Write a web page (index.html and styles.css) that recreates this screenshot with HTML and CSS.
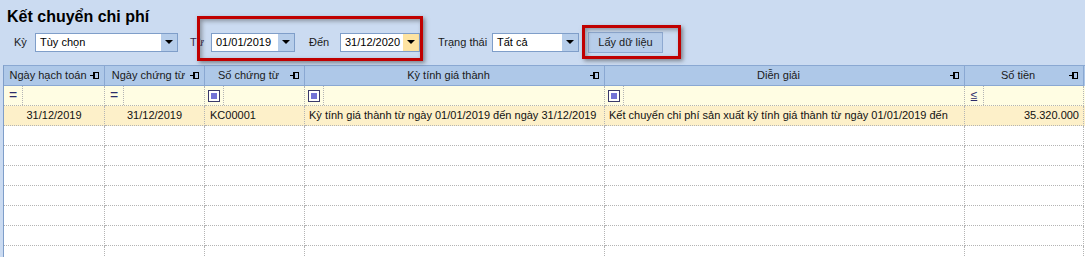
FILE: index.html
```html
<!DOCTYPE html>
<html lang="vi">
<head>
<meta charset="utf-8">
<title>Kết chuyển chi phí</title>
<link rel="stylesheet" href="styles.css">
</head>
<body>
<div class="page">
  <h1 class="title">Kết chuyển chi phí</h1>
  <div class="toolbar">
    <span class="lbl lbl-ky">Kỳ</span>
    <div class="combo combo-ky"><span class="val">Tùy chọn</span><span class="btn"><i class="tri"></i></span></div>
    <span class="lbl lbl-tu">Từ</span>
    <div class="combo combo-d1"><span class="val">01/01/2019</span><span class="btn"><i class="tri"></i></span></div>
    <span class="lbl lbl-den">Đến</span>
    <div class="combo combo-d2"><span class="val">31/12/2020</span><span class="btn hot"><i class="tri"></i></span></div>
    <span class="lbl lbl-tt">Trạng thái</span>
    <div class="combo combo-tt"><span class="val">Tất cả</span><span class="btn"><i class="tri"></i></span></div>
    <button class="fetch">Lấy dữ liệu</button>
    <div class="mark mark-1"></div>
    <div class="mark mark-2"></div>
  </div>
  <div class="grid">
    <div class="row head">
      <div class="c c1"><span class="ht">Ngày hạch toán</span><i class="pin"></i></div>
      <div class="c c2"><span class="ht">Ngày chứng từ</span><i class="pin"></i></div>
      <div class="c c3"><span class="ht">Số chứng từ</span><i class="pin"></i></div>
      <div class="c c4"><span class="ht">Kỳ tính giá thành</span><i class="pin"></i></div>
      <div class="c c5"><span class="ht">Diễn giải</span><i class="pin"></i></div>
      <div class="c c6"><span class="ht">Số tiền</span><i class="pin"></i></div>
    </div>
    <div class="row filter">
      <div class="c c1"><span class="op">=</span></div>
      <div class="c c2"><span class="op">=</span></div>
      <div class="c c3"><span class="op"><i class="sq"></i></span></div>
      <div class="c c4"><span class="op"><i class="sq"></i></span></div>
      <div class="c c5"><span class="op"><i class="sq"></i></span></div>
      <div class="c c6"><span class="op le">≤</span></div>
    </div>
    <div class="row data">
      <div class="c c1 center">31/12/2019</div>
      <div class="c c2 center">31/12/2019</div>
      <div class="c c3">KC00001</div>
      <div class="c c4">Kỳ tính giá thành từ ngày 01/01/2019 đến ngày 31/12/2019</div>
      <div class="c c5 wrap">Kết chuyển chi phí sản xuất kỳ tính giá thành từ ngày 01/01/2019 đến ngày 31/12/2019</div>
      <div class="c c6 right">35.320.000</div>
    </div>
    <div class="row empty"><div class="c c1"></div><div class="c c2"></div><div class="c c3"></div><div class="c c4"></div><div class="c c5"></div><div class="c c6"></div></div>
    <div class="row empty"><div class="c c1"></div><div class="c c2"></div><div class="c c3"></div><div class="c c4"></div><div class="c c5"></div><div class="c c6"></div></div>
    <div class="row empty"><div class="c c1"></div><div class="c c2"></div><div class="c c3"></div><div class="c c4"></div><div class="c c5"></div><div class="c c6"></div></div>
    <div class="row empty"><div class="c c1"></div><div class="c c2"></div><div class="c c3"></div><div class="c c4"></div><div class="c c5"></div><div class="c c6"></div></div>
    <div class="row empty"><div class="c c1"></div><div class="c c2"></div><div class="c c3"></div><div class="c c4"></div><div class="c c5"></div><div class="c c6"></div></div>
    <div class="row empty"><div class="c c1"></div><div class="c c2"></div><div class="c c3"></div><div class="c c4"></div><div class="c c5"></div><div class="c c6"></div></div>
    <div class="row empty"><div class="c c1"></div><div class="c c2"></div><div class="c c3"></div><div class="c c4"></div><div class="c c5"></div><div class="c c6"></div></div>
  </div>
</div>
</body>
</html>
```
FILE: styles.css
```css
html, body {
  margin: 0;
  padding: 0;
  height: 100%;
  overflow: hidden;
}
body {
  background: #cbdbf1;
  font-family: "Liberation Sans", Arial, sans-serif;
  font-size: 11px;
  color: #000;
}
.title {
  margin: 0;
  padding: 6px 0 0 7px;
  height: 22px;
  font-size: 16px;
  font-weight: bold;
  line-height: 22px;
  color: #000;
}
.toolbar {
  position: relative;
  display: flex;
  align-items: center;
  height: 20px;
  margin-top: 4px;
}
.lbl {
  white-space: nowrap;
  line-height: 20px;
  color: #1a1a1a;
}
.lbl-ky { margin-left: 14px; width: 21px; }
.lbl-tu { margin-left: 12px; width: 21px; color: #3a2a4a; }
.lbl-den { margin-left: 14px; width: 31px; }
.lbl-tt { margin-left: 18px; width: 54px; }
.combo {
  display: flex;
  height: 17px;
  border: 1px solid #7f9ec9;
  background: #fff;
}
.combo .val {
  flex: 1;
  padding-left: 4px;
  line-height: 17px;
  white-space: nowrap;
  overflow: hidden;
}
.combo .btn {
  width: 16px;
  background: #b6cdea;
  display: flex;
  align-items: center;
  justify-content: center;
}
.combo .btn.hot {
  background: #fde3a1;
}
.tri {
  display: block;
  width: 0;
  height: 0;
  border-left: 4px solid transparent;
  border-right: 4px solid transparent;
  border-top: 4px solid #000;
}
.combo-ky { width: 141px; }
.combo-d1 { width: 82px; }
.combo-d2 { width: 78px; }
.combo-tt { width: 85px; }
.fetch {
  margin-left: 9px;
  width: 75px;
  height: 21px;
  padding: 0;
  border: 1px solid #8ea9d1;
  background: #b7cdea;
  font-family: "Liberation Sans", Arial, sans-serif;
  font-size: 11px;
  color: #1a1a1a;
}
.mark {
  position: absolute;
  border: 3px solid #c00000;
  box-shadow: 2px 2px 4px rgba(60, 60, 60, 0.55), inset 2px 2px 4px rgba(60, 60, 60, 0.45);
}
.mark-1 { left: 197px; top: -16px; width: 220px; height: 39px; }
.mark-2 { left: 582px; top: -7px; width: 93px; height: 28px; }

.grid {
  margin: 13px 0 0 3px;
  width: 1081px;
  border-left: 1px solid #7f9ec9;
  border-top: 1px solid #8aa8d2;
  background: #fff;
}
.row {
  display: flex;
  height: 20px;
}
.c {
  box-sizing: border-box;
  height: 20px;
  line-height: 19px;
  white-space: nowrap;
  overflow: hidden;
  padding: 0 4px;
}
.c1 { width: 101px; }
.c2 { width: 100px; }
.c3 { width: 100px; }
.c4 { width: 300px; }
.c5 { width: 360px; }
.c6 { width: 119px; }

.head {
  background: #aec8e8;
}
.head .c {
  display: flex;
  align-items: center;
  border-right: 1px solid #8aa8d2;
  border-bottom: 1px solid #8aa8d2;
  color: #1a1a1a;
  padding: 0 5px 0 4px;
}
.head .ht {
  flex: 1;
  text-align: center;
}
.pin {
  position: relative;
  display: block;
  width: 9px;
  height: 7px;
  margin-left: 2px;
}
.pin::before {
  content: "";
  position: absolute;
  left: 0;
  top: 3px;
  width: 3px;
  height: 1px;
  background: #000;
}
.pin::after {
  content: "";
  position: absolute;
  left: 3px;
  top: 0;
  width: 3px;
  height: 5px;
  border: 1px solid #000;
  border-left-width: 2px;
}

.filter {
  background: #fffde3;
}
.filter .c {
  padding: 0;
  border-right: 1px dotted #b4b4b4;
  border-bottom: 1px dotted #b4b4b4;
}
.op {
  display: flex;
  align-items: center;
  justify-content: center;
  width: 18px;
  height: 19px;
  border-right: 1px dotted #b4b4b4;
  font-size: 14px;
  color: #2b2b6a;
}
.sq {
  display: block;
  box-sizing: border-box;
  width: 12px;
  height: 12px;
  border: 1px solid #3a3a6a;
  background: #fff;
  box-shadow: inset 0 0 0 2px #fff, inset 0 0 0 6px #7373d6;
}
.le {
  font-size: 12px;
  text-decoration: underline;
}

.data {
  background: #fdf0c9;
}
.data .c {
  border-right: 1px dotted #b4b4b4;
  border-bottom: 1px dotted #b4b4b4;
  color: #111;
}
.data .wrap {
  white-space: normal;
}
.center { text-align: center; }
.right { text-align: right; }
.data .c3 { padding-left: 5px; }

.empty .c {
  border-right: 1px dotted #b4b4b4;
  border-bottom: 1px dotted #b4b4b4;
}
```
